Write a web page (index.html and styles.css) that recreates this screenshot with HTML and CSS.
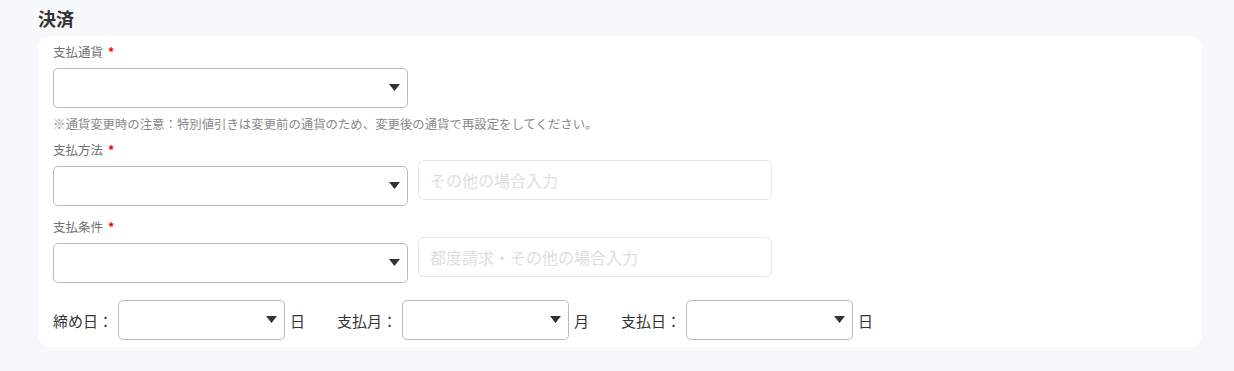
FILE: index.html
```html
<!DOCTYPE html>
<html lang="ja">
<head>
  <meta charset="UTF-8">
  <meta name="viewport" content="width=device-width, initial-scale=1.0">
  <title>決済</title>
  <link rel="stylesheet" href="styles.css">
</head>
<body>
  <section class="section">
    <h2 class="section-title">決済</h2>
    <div class="card">
      <div class="field">
        <label class="field-label">支払通貨<span class="req">*</span></label>
        <div class="select-box">
          <select name="currency"></select>
          <svg class="caret" viewBox="0 0 11 7"><path d="M0 0H11L5.5 7Z"/></svg>
        </div>
        <p class="note">※通貨変更時の注意：特別値引きは変更前の通貨のため、変更後の通貨で再設定をしてください。</p>
      </div>

      <div class="field field-method">
        <label class="field-label">支払方法<span class="req">*</span></label>
        <div class="field-row">
          <div class="select-box">
            <select name="method"></select>
            <svg class="caret" viewBox="0 0 11 7"><path d="M0 0H11L5.5 7Z"/></svg>
          </div>
          <input type="text" class="text-input" placeholder="その他の場合入力">
        </div>
      </div>

      <div class="field field-terms">
        <label class="field-label">支払条件<span class="req">*</span></label>
        <div class="field-row">
          <div class="select-box">
            <select name="terms"></select>
            <svg class="caret" viewBox="0 0 11 7"><path d="M0 0H11L5.5 7Z"/></svg>
          </div>
          <input type="text" class="text-input" placeholder="都度請求・その他の場合入力">
        </div>
      </div>

      <div class="date-row">
        <div class="date-item">
          <span class="date-label">締め日：</span>
          <div class="select-box narrow">
            <select name="closing"></select>
            <svg class="caret" viewBox="0 0 11 7"><path d="M0 0H11L5.5 7Z"/></svg>
          </div>
          <span class="unit">日</span>
        </div>
        <div class="date-item">
          <span class="date-label">支払月：</span>
          <div class="select-box narrow">
            <select name="pay-month"></select>
            <svg class="caret" viewBox="0 0 11 7"><path d="M0 0H11L5.5 7Z"/></svg>
          </div>
          <span class="unit">月</span>
        </div>
        <div class="date-item">
          <span class="date-label">支払日：</span>
          <div class="select-box narrow">
            <select name="pay-day"></select>
            <svg class="caret" viewBox="0 0 11 7"><path d="M0 0H11L5.5 7Z"/></svg>
          </div>
          <span class="unit">日</span>
        </div>
      </div>
    </div>
  </section>
</body>
</html>
```

FILE: styles.css
```css
body {
  margin: 0;
  padding: 6px 32px 24px 38px;
  background-color: #f7f8fc;
  font-family: "Noto Sans CJK JP", "Noto Sans", sans-serif;
}
.section-title {
  margin: 0 0 6px;
  font-size: 18px;
  line-height: 24px;
  font-weight: 700;
  color: #333;
}
.card {
  background-color: #ffffff;
  border-radius: 12px;
  padding: 7px 15px;
}
.field-label {
  display: block;
  font-size: 12.5px;
  line-height: 18px;
  color: #6f6f6f;
  margin-bottom: 7px;
}
.req {
  color: #ff0000;
  font-weight: 700;
  margin-left: 5px;
}
.select-box {
  position: relative;
  width: 355px;
  height: 40px;
}
.select-box select {
  width: 100%;
  height: 100%;
  box-sizing: border-box;
  border: 1px solid #bcbcbc;
  border-radius: 5px;
  background-color: #fff;
  appearance: none;
  -webkit-appearance: none;
}
.caret {
  position: absolute;
  right: 8px;
  top: 16px;
  width: 11px;
  height: 7px;
  fill: #333;
  pointer-events: none;
}
.select-box.narrow {
  width: 167px;
}
.note {
  margin: 7px 0 0;
  font-size: 12.4px;
  line-height: 18px;
  color: #888;
}
.field-method {
  margin-top: 8px;
}
.field-terms {
  margin-top: 12px;
}
.field-row {
  display: flex;
  align-items: flex-start;
  gap: 10px;
}
.text-input {
  width: 354px;
  height: 40px;
  box-sizing: border-box;
  margin: -6px 0 0;
  padding: 0 11px;
  border: 1px solid #e8e8e8;
  border-radius: 6px;
  font-family: inherit;
  font-size: 16px;
  color: #333;
}
.text-input::placeholder {
  color: #dedede;
}
.date-row {
  display: flex;
  align-items: center;
  gap: 32px;
  margin-top: 17px;
}
.date-item {
  display: flex;
  align-items: center;
  gap: 5px;
  font-size: 15px;
  color: #333;
}
```
